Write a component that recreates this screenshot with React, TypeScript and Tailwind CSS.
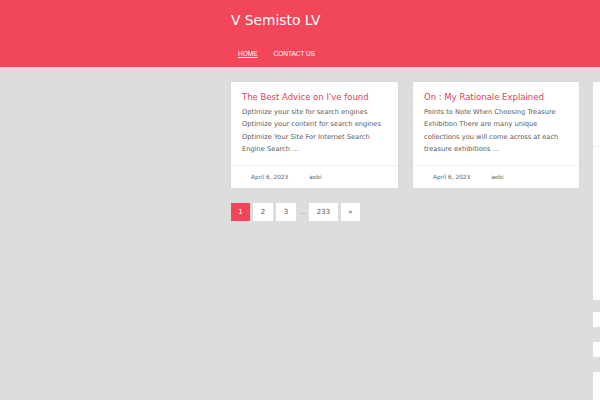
import React from 'react'

interface Post {
  title: string
  excerpt: string
  date: string
  author: string
}

const posts: Post[] = [
  {
    title: "The Best Advice on I've found",
    excerpt:
      'Optimize your site for search engines Optimize your content for search engines Optimize Your Site For Internet Search Engine Search …',
    date: 'April 6, 2023',
    author: 'aebi',
  },
  {
    title: 'On : My Rationale Explained',
    excerpt:
      'Points to Note When Choosing Treasure Exhibition There are many unique collections you will come across at each treasure exhibitions …',
    date: 'April 6, 2023',
    author: 'aebi',
  },
]

const font = "font-['DejaVu_Sans',sans-serif]"

function PostCard({ post, wide }: { post: Post; wide: string }) {
  return (
    <article className={`${wide} h-[106px] bg-white shadow-[0_0_1px_rgba(0,0,0,0.15)] flex flex-col`}>
      <div className="px-[11px] pt-[9px] flex-1">
        <h2 className="text-[8.5px] leading-[12px] font-medium text-[#e2415a]">{post.title}</h2>
        <p className="mt-[3px] text-[6.7px] leading-[12.3px] text-[#5a5a5a]">{post.excerpt}</p>
      </div>
      <div className="h-[23px] border-t border-[#f0f0f0] flex items-center pl-[20px] text-[5.8px] text-[#666]">
        <span>{post.date}</span>
        <span className="ml-[21px]">{post.author}</span>
      </div>
    </article>
  )
}

function PageBox({ children, active, w }: { children: React.ReactNode; active?: boolean; w: string }) {
  return (
    <span
      className={`${w} h-[18px] flex items-center justify-center text-[7px] ${
        active ? 'bg-[#f2465a] text-white' : 'bg-white text-[#555]'
      }`}
    >
      {children}
    </span>
  )
}

export default function App() {
  return (
    <div className={`w-[600px] h-[400px] overflow-hidden bg-[#dddddd] ${font}`}>
      {/* Header */}
      <header className="h-[67px] bg-[#f2465a] pl-[231px] flex flex-col">
        <h1 className="pt-[11px] text-[13.8px] leading-[18px] text-white">V Semisto LV</h1>
        <nav className="mt-[21px] pl-[7px] flex gap-[16px] font-['Liberation_Sans',Arial,sans-serif] text-[6.5px] leading-[8px] text-white uppercase">
          <a className="underline">Home</a>
          <a>Contact Us</a>
        </nav>
      </header>

      {/* Body */}
      <div className="flex pl-[231px] pt-[15px] gap-[14px]">
        <main className="flex flex-col shrink-0">
          <div className="flex gap-[15px]">
            <PostCard post={posts[0]} wide="w-[167px]" />
            <PostCard post={posts[1]} wide="w-[166px]" />
          </div>
          <div className="mt-[15px] flex items-center gap-[3px]">
            <PageBox active w="w-[19px]">1</PageBox>
            <PageBox w="w-[20px]">2</PageBox>
            <PageBox w="w-[20px]">3</PageBox>
            <span className="w-[7px] text-center text-[7px] text-[#777]">…</span>
            <PageBox w="w-[29px]">233</PageBox>
            <PageBox w="w-[19px]">»</PageBox>
          </div>
        </main>

        {/* Sidebar */}
        <aside className="w-[200px] shrink-0 flex flex-col">
          <div className="h-[218px] bg-white">
            <div className="h-[65px] border-b border-[#ececec]" />
          </div>
          <div className="mt-[12px] h-[15px] bg-white" />
          <div className="mt-[15px] h-[15px] bg-white" />
          <div className="mt-[15px] h-[40px] bg-white" />
        </aside>
      </div>
    </div>
  )
}
